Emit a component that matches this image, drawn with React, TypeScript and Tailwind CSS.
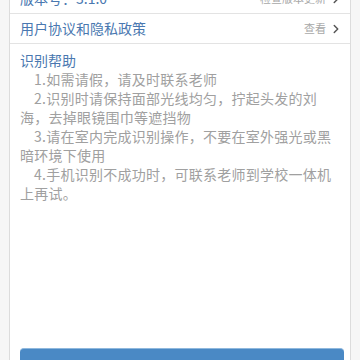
import { ChevronRight } from "lucide-react";

const tips = [
  "1.如需请假，请及时联系老师",
  "2.识别时请保持面部光线均匀，拧起头发的刘海，去掉眼镜围巾等遮挡物",
  "3.请在室内完成识别操作，不要在室外强光或黑暗环境下使用",
  "4.手机识别不成功时，可联系老师到学校一体机上再试。",
];

function Row({ label, action }: { label: string; action: string }) {
  return (
    <div className="h-[30px] flex items-center justify-between pl-[10px] pr-[7px] border-b border-[#e3e3e3]">
      <span className="text-[14px] text-[#4a78b0]">{label}</span>
      <span className="flex items-center text-[11px] text-[#a8a8a8]">
        {action}
        <ChevronRight className="w-[14px] h-[14px] text-[#555] ml-[3px]" strokeWidth={2.5} />
      </span>
    </div>
  );
}

export default function App() {
  return (
    <div
      className="h-[360px] overflow-hidden bg-[#f6f6f6]"
      style={{ fontFamily: '"Noto Sans CJK SC", "Noto Sans", sans-serif' }}
    >
      <div className="mx-[9px] -mt-[16px] border-x border-[#dcdcdc] bg-white">
        <Row label="版本号：3.1.0" action="检查版本更新" />
        <Row label="用户协议和隐私政策" action="查看" />

        {/* help section */}
        <div className="pl-[10px] pr-[14px] pt-[7px]">
          <p className="text-[14px] leading-[19px] text-[#4a78b0]">识别帮助</p>
          {tips.map((t) => (
            <p key={t} className="text-[14px] leading-[19px] tracking-[0.25px] text-[#a0a0a0] indent-[14px]">
              {t}
            </p>
          ))}
          <div className="h-[145px]" />
          <button className="w-[324px] h-[40px] rounded-[4px] bg-[#4a89c5] border-t border-[#8fb8dd] text-white" />
        </div>
      </div>
    </div>
  );
}
